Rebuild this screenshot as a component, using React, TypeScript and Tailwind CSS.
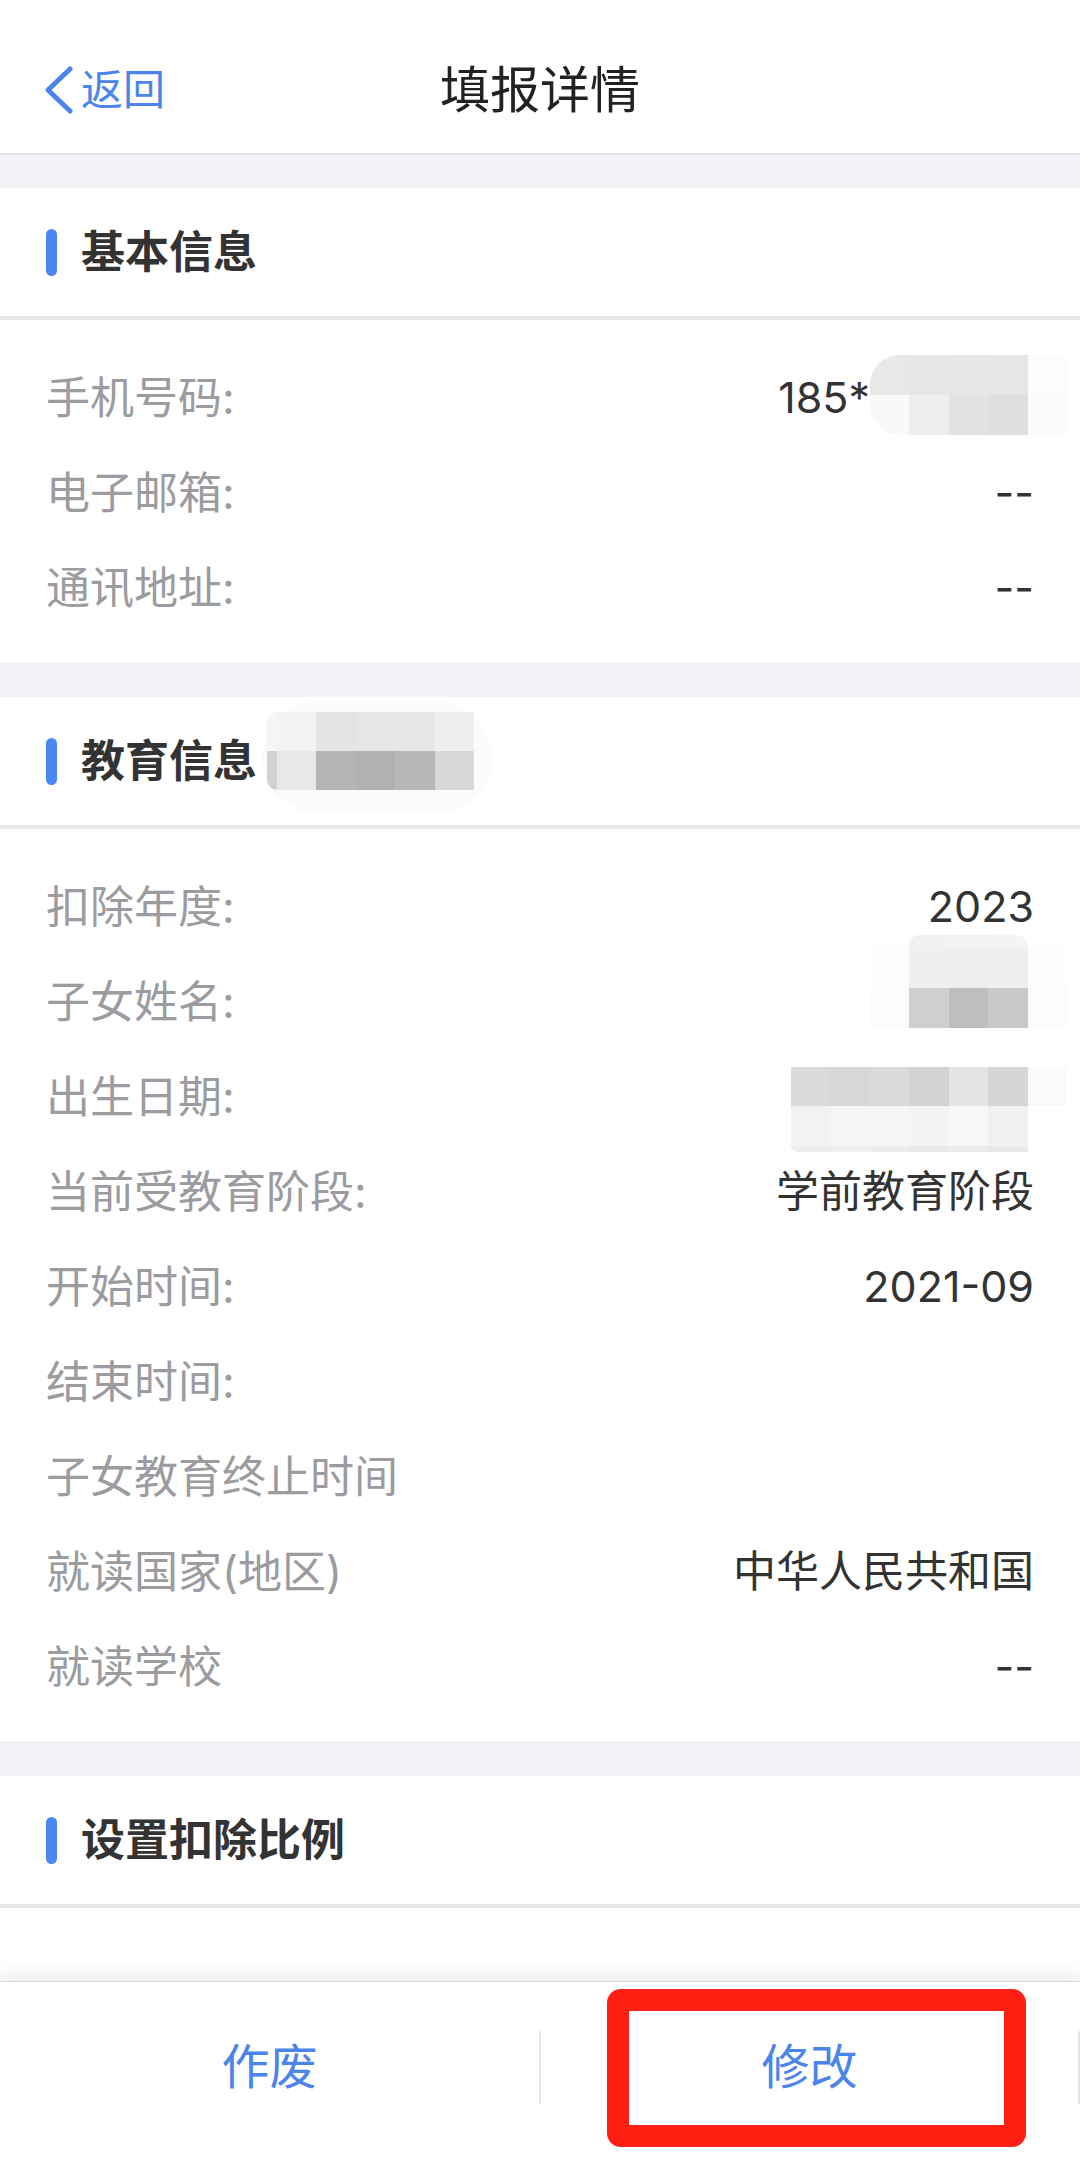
type MosaicRow = { h: string; cells: string[] };

function Mosaic({ className, rows }: { className: string; rows: MosaicRow[] }) {
  return (
    <div className={`absolute flex flex-col ${className}`}>
      {rows.map((row, i) => (
        <div key={i} className={`flex ${row.h}`}>
          {row.cells.map((cell, j) => (
            <div key={j} className={`h-full ${cell}`} />
          ))}
        </div>
      ))}
    </div>
  );
}

const phoneMosaic: MosaicRow[] = [
  {
    h: "h-[40px]",
    cells: [
      "w-[39px] bg-[#e8e8e8] rounded-tl-[30px]",
      "w-[40px] bg-[#e6e6e6]",
      "w-[39px] bg-[#e7e7e7]",
      "w-[40px] bg-[#e6e6e6]",
      "w-[39px] bg-[#fcfcfc]",
    ],
  },
  {
    h: "h-[40px]",
    cells: [
      "w-[39px] bg-[#f9f9f9] rounded-bl-[30px]",
      "w-[40px] bg-[#eeeeee]",
      "w-[39px] bg-[#e2e2e2]",
      "w-[40px] bg-[#dfdfdf]",
      "w-[39px] bg-[#fbfbfb]",
    ],
  },
];

const eduMosaic: MosaicRow[] = [
  {
    h: "h-[39px]",
    cells: [
      "w-[10px] bg-[#f5f5f5] rounded-tl-[20px]",
      "w-[39px] bg-[#f3f3f3]",
      "w-[40px] bg-[#e4e4e4]",
      "w-[39px] bg-[#e6e6e6]",
      "w-[40px] bg-[#e7e7e7]",
      "w-[39px] bg-[#efefef]",
    ],
  },
  {
    h: "h-[39px]",
    cells: [
      "w-[10px] bg-[#d2d2d2] rounded-bl-[20px]",
      "w-[39px] bg-[#e8e8e8]",
      "w-[40px] bg-[#b5b5b5]",
      "w-[39px] bg-[#b1b1b1]",
      "w-[40px] bg-[#b8b8b8]",
      "w-[39px] bg-[#d8d8d8]",
    ],
  },
];

const nameMosaic: MosaicRow[] = [
  {
    h: "h-[13px]",
    cells: [
      "w-[39px]",
      "w-[40px] bg-[#f1f1f1] rounded-tl-[10px]",
      "w-[39px] bg-[#f3f3f3]",
      "w-[40px] bg-[#f4f4f4] rounded-tr-[12px]",
      "w-[39px]",
    ],
  },
  {
    h: "h-[40px]",
    cells: [
      "w-[39px] bg-[#fdfdfd]",
      "w-[40px] bg-[#efefef]",
      "w-[39px] bg-[#eeeeee]",
      "w-[40px] bg-[#efefef]",
      "w-[39px] bg-[#fdfdfd]",
    ],
  },
  {
    h: "h-[40px]",
    cells: [
      "w-[39px] bg-[#fcfcfc]",
      "w-[40px] bg-[#cfcfcf]",
      "w-[39px] bg-[#bebebe]",
      "w-[40px] bg-[#c9c9c9]",
      "w-[39px] bg-[#fcfcfc]",
    ],
  },
];

const birthMosaic: MosaicRow[] = [
  {
    h: "h-[39px]",
    cells: [
      "w-[39px] bg-[#dadada]",
      "w-[40px] bg-[#d7d7d7]",
      "w-[39px] bg-[#dadada]",
      "w-[40px] bg-[#d3d3d3]",
      "w-[39px] bg-[#e4e4e4]",
      "w-[40px] bg-[#d6d6d6]",
      "w-[39px] bg-[#fafafa]",
    ],
  },
  {
    h: "h-[40px]",
    cells: [
      "w-[39px] bg-[#f2f2f2]",
      "w-[40px] bg-[#f5f5f5]",
      "w-[39px] bg-[#f5f5f5]",
      "w-[40px] bg-[#f3f3f3]",
      "w-[39px] bg-[#f7f7f7]",
      "w-[40px] bg-[#f1f1f1]",
      "w-[39px]",
    ],
  },
  {
    h: "h-[6px]",
    cells: [
      "w-[39px] bg-[#ededed] rounded-bl-[6px]",
      "w-[40px] bg-[#eeeeee]",
      "w-[39px] bg-[#ececec]",
      "w-[40px] bg-[#e9e9e9]",
      "w-[39px] bg-[#ececec]",
      "w-[40px] bg-[#e8e8e8]",
      "w-[39px]",
    ],
  },
];

function Gap() {
  return <div className="h-[35px] bg-[#f2f3f7] shrink-0" />;
}

function SectionHeader({ title, children }: { title: string; children?: React.ReactNode }) {
  return (
    <div className="relative h-[128px] shrink-0 flex items-center pl-[46px] border-b-4 border-[#e8e8ec] box-content">
      <div className="w-[11px] h-[47px] rounded-full bg-[#4b87f4]" />
      <span className="ml-[24px] text-[44px] leading-none font-bold text-[#333333]">{title}</span>
      {children}
    </div>
  );
}

function Row({ label, value, children }: { label: string; value?: string; children?: React.ReactNode }) {
  return (
    <div className="relative h-[95px] flex items-center justify-between px-[46px]">
      <span className="text-[44px] leading-none text-[#9b9ba0]">{label}</span>
      {value && <span className="text-[43px] leading-none text-[#333333]">{value}</span>}
      {children}
    </div>
  );
}

export default function App() {
  return (
    <div className="w-[1080px] h-[2174px] flex flex-col bg-white overflow-hidden font-['Inter','Noto_Sans_CJK_SC',sans-serif]">
      {/* nav */}
      <div className="relative h-[155px] shrink-0 flex items-center justify-center pt-[27px] border-b-2 border-[#e4e4e9]">
        <div className="absolute left-[43px] top-[66px] flex items-center">
          <svg width="32" height="48" viewBox="0 0 32 48" fill="none">
            <path d="M27 3 L5 24 L27 45" stroke="#4b84ea" strokeWidth="5" strokeLinecap="round" strokeLinejoin="round" />
          </svg>
          <span className="ml-[6px] text-[42px] leading-none text-[#4b84ea]">返回</span>
        </div>
        <span className="text-[50px] leading-none text-[#222222]">填报详情</span>
      </div>

      <div className="flex-1 flex flex-col overflow-hidden">
        <div className="h-[33px] bg-[#f2f3f7] shrink-0" />
        <SectionHeader title="基本信息" />
        <div className="pt-[30px] pb-[27px] shrink-0">
          <Row label="手机号码:">
            <div className="flex items-center">
              <span className="text-[43px] leading-none text-[#333333] mr-[164px]">185*</span>
            </div>
            <Mosaic className="left-[870px] top-[5px]" rows={phoneMosaic} />
          </Row>
          <Row label="电子邮箱:" value="--" />
          <Row label="通讯地址:" value="--" />
        </div>

        <Gap />
        <SectionHeader title="教育信息">
          <div className="absolute left-[262px] top-[4px] w-[230px] h-[112px] rounded-[56px] bg-[#fbfbfb]" />
          <Mosaic className="left-[267px] top-[15px]" rows={eduMosaic} />
        </SectionHeader>
        <div className="pt-[30px] pb-[27px] shrink-0">
          <Row label="扣除年度:" value="2023" />
          <Row label="子女姓名:">
            <Mosaic className="left-[870px] top-[-19px]" rows={nameMosaic} />
          </Row>
          <Row label="出生日期:">
            <Mosaic className="left-[791px] top-[18px]" rows={birthMosaic} />
          </Row>
          <Row label="当前受教育阶段:" value="学前教育阶段" />
          <Row label="开始时间:" value="2021-09" />
          <Row label="结束时间:" />
          <Row label="子女教育终止时间" />
          <Row label="就读国家(地区)" value="中华人民共和国" />
          <Row label="就读学校" value="--" />
        </div>

        <Gap />
        <SectionHeader title="设置扣除比例" />
        <div className="flex-1" />
      </div>

      {/* bottom bar */}
      <div className="relative h-[193px] shrink-0 bg-white border-t border-[#d9d9dc] shadow-[0_-8px_18px_rgba(0,0,0,0.07)]">
        <div className="h-[170px] flex items-center">
          <div className="w-[539px] flex items-center justify-center">
            <span className="text-[48px] leading-none text-[#4b84ea]">作废</span>
          </div>
          <div className="w-[2px] h-[73px] bg-[#e6e6e8]" />
          <div className="w-[537px] flex items-center justify-center">
            <span className="text-[48px] leading-none text-[#4b84ea]">修改</span>
          </div>
          <div className="w-[2px] h-[73px] bg-[#e6e6e8]" />
        </div>
        <div className="absolute left-[607px] top-[7px] w-[419px] h-[158px] border-[22px] border-[#ff1e12] rounded-[14px]" />
      </div>
    </div>
  );
}
